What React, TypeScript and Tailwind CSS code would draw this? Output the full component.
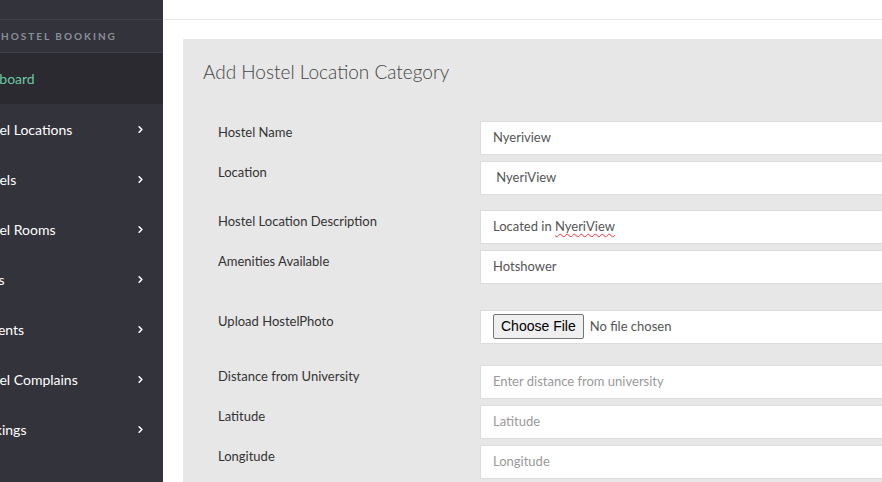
import React from 'react';
import { ChevronRight } from 'lucide-react';

const menu = [
  { label: 'Hostel Locations' },
  { label: 'Hostels' },
  { label: 'Hostel Rooms' },
  { label: 'Users' },
  { label: 'Students' },
  { label: 'Hostel Complains' },
  { label: 'Bookings' },
];

const Field: React.FC<{ label: string; value?: string; placeholder?: string; rowClass: string; children?: React.ReactNode }> = ({
  label,
  value,
  placeholder,
  rowClass,
  children,
}) => (
  <div className={`flex ${rowClass}`}>
    <div className="w-[277px] shrink-0 pl-[15px] pt-[2px] text-[13px] text-[#333]">{label}</div>
    <div className="flex h-[34px] flex-1 items-center border border-r-0 border-[#dcdcdc] bg-white pl-3 text-[13px]">
      {children ? children : value ? <span className="whitespace-pre text-[#555]">{value}</span> : <span className="text-[#999]">{placeholder}</span>}
    </div>
  </div>
);

export default function App() {
  return (
    <div className="flex h-[482px] w-[882px] overflow-hidden bg-white font-['Lato',sans-serif]">
      {/* sidebar */}
      <aside className="flex w-[163px] shrink-0 flex-col bg-[#33333b]">
        <div className="h-[20px] border-b border-[#3f3f48]" />
        <div className="flex h-[33px] items-center border-b border-[#3f3f48] pl-[1px] text-[10px] font-bold tracking-[0.2em] whitespace-nowrap text-[#8b8f97]">
          HOSTEL BOOKING
        </div>
        <div className="flex h-[51px] items-center bg-[#2a2a30] -ml-[32px] text-[14px] whitespace-nowrap text-[#6dc6a0]">
          Dashboard
        </div>
        {menu.map((m) => (
          <div key={m.label} className="flex h-[50px] items-center justify-between pr-[17px] text-[14px] whitespace-nowrap text-white">
            <span className="-ml-[30px]">{m.label}</span>
            <ChevronRight size={11} strokeWidth={3.5} className="text-white" />
          </div>
        ))}
      </aside>

      {/* main */}
      <main className="flex flex-1 flex-col">
        <div className="h-[20px] shrink-0 border-b border-[#e6e6e6]" />
        <div className="mt-[19px] ml-[20px] flex-1 bg-[#e7e7e7] pl-[20px]">
          <h2 className="pt-[19px] text-[19px] font-light text-[#444]">Add Hostel Location Category</h2>
          <div className="mt-[34px] flex flex-col">
            <Field rowClass="" label="Hostel Name" value="Nyeriview" />
            <Field rowClass="mt-[6px]" label="Location" value=" NyeriView" />
            <Field rowClass="mt-[15px]" label="Hostel Location Description">
              <span className="text-[#555]">
                Located in <span className="underline decoration-wavy decoration-red-500 decoration-1 underline-offset-2">NyeriView</span>
              </span>
            </Field>
            <Field rowClass="mt-[6px]" label="Amenities Available" value="Hotshower" />
            <Field rowClass="mt-[26px]" label="Upload HostelPhoto">
              <span className="rounded-[2px] border border-[#767676] bg-[#efefef] px-[7px] py-[1px] font-['Liberation_Sans',sans-serif] text-[14px] text-black">
                Choose File
              </span>
              <span className="ml-[6px] text-[#555]">No file chosen</span>
            </Field>
            <Field rowClass="mt-[21px]" label="Distance from University" placeholder="Enter distance from university" />
            <Field rowClass="mt-[6px]" label="Latitude" placeholder="Latitude" />
            <Field rowClass="mt-[6px]" label="Longitude" placeholder="Longitude" />
          </div>
        </div>
      </main>
    </div>
  );
}
